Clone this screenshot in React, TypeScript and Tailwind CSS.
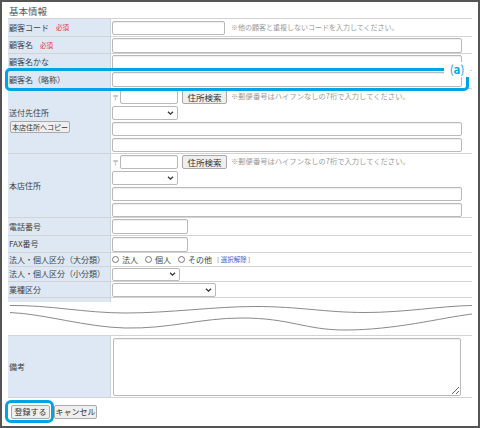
import React from 'react';

const inputCls =
  'rounded-[2px] border border-[#b9b9b9] bg-white shadow-[inset_0_1px_1px_rgba(0,0,0,0.07)] outline-none';
const btnCls =
  'flex items-center justify-center rounded-[2px] border border-[#a9a9a9] bg-[#efefef] leading-none text-[#333]';
const rowCls = 'flex border-b border-[#d3d3d3]';
const labelCls =
  'flex w-[103px] shrink-0 items-center border-r border-[#cbd4de] bg-[#dde8f4] pl-[1px] text-[8px] leading-none text-[#444]';
const valueCls = 'flex flex-1 items-center pl-[1px]';

function Required() {
  return <span className="ml-[7px] text-[6.5px] leading-none text-[#e8332f]">必須</span>;
}

function Select({ className }: { className: string }) {
  return (
    <div className={`relative ${className}`}>
      <select className="h-full w-full appearance-none rounded-[2px] border border-[#b9b9b9] bg-white outline-none" />
      <svg
        className="pointer-events-none absolute right-[4px] top-1/2 -translate-y-1/2"
        width="7"
        height="5"
        viewBox="0 0 7 5"
      >
        <path d="M1 1.2l2.5 2.4L6 1.2" stroke="#333" strokeWidth="1.3" fill="none" />
      </svg>
    </div>
  );
}

function AddressBlock() {
  return (
    <div className="flex flex-1 flex-col gap-[2px] py-[1px] pl-[1px]">
      <div className="flex h-[14px] items-center">
        <span className="w-[8px] text-[7px] leading-none text-[#999]">〒</span>
        <input className={`${inputCls} h-[14px] w-[58px]`} />
        <button className={`${btnCls} ml-[4px] h-[14px] w-[45px] text-[8.5px]`}>住所検索</button>
        <span className="ml-[4px] whitespace-nowrap text-[7.3px] leading-none text-[#999]">
          ※郵便番号はハイフンなしの7桁で入力してください。
        </span>
      </div>
      <Select className="h-[14px] w-[66px]" />
      <input className={`${inputCls} h-[14px] w-[350px]`} />
      <input className={`${inputCls} h-[14px] w-[350px]`} />
    </div>
  );
}

function Radio({ label }: { label: string }) {
  return (
    <label className="flex items-center gap-[3px]">
      <input
        type="radio"
        name="kubun"
        className="h-[7px] w-[7px] appearance-none rounded-full border border-[#777] bg-white"
      />
      <span className="text-[8px] leading-none text-[#444]">{label}</span>
    </label>
  );
}

export default function App() {
  return (
    <div className="relative h-[428px] w-[480px] overflow-hidden border-2 border-[#555] bg-white font-['Noto_Sans_CJK_JP','Noto_Sans',sans-serif]">
      <div className="ml-[6px] w-[464px]">
        <div className="h-[16px] pl-[1px] pt-[3px] text-[9.5px] leading-[12px] text-[#555]">基本情報</div>

        <div className="border-t border-[#d3d3d3]">
          <div className={`${rowCls} h-[18px]`}>
            <div className={labelCls}>
              顧客コード
              <Required />
            </div>
            <div className={valueCls}>
              <input className={`${inputCls} h-[14px] w-[113px]`} />
              <span className="ml-[6px] whitespace-nowrap text-[7px] leading-none text-[#999]">
                ※他の顧客と重複しないコードを入力してください。
              </span>
            </div>
          </div>

          <div className={`${rowCls} h-[17px]`}>
            <div className={labelCls}>
              顧客名
              <Required />
            </div>
            <div className={valueCls}>
              <input className={`${inputCls} h-[15px] w-[350px]`} />
            </div>
          </div>

          <div className={`${rowCls} h-[17px]`}>
            <div className={labelCls}>顧客名かな</div>
            <div className={valueCls}>
              <input className={`${inputCls} h-[15px] w-[350px]`} />
            </div>
          </div>

          <div className={`${rowCls} h-[18px]`}>
            <div className={labelCls}>顧客名（略称）</div>
            <div className={valueCls}>
              <input className={`${inputCls} h-[15px] w-[350px]`} />
            </div>
          </div>

          <div className={`${rowCls} h-[65px]`}>
            <div className={`${labelCls} flex-col !items-start justify-center gap-[4px]`}>
              <span>送付先住所</span>
              <button className={`${btnCls} ml-[1px] h-[12px] w-[60px] text-[7px]`}>本店住所へコピー</button>
            </div>
            <AddressBlock />
          </div>

          <div className={`${rowCls} h-[64px]`}>
            <div className={labelCls}>本店住所</div>
            <AddressBlock />
          </div>

          <div className={`${rowCls} h-[18px]`}>
            <div className={labelCls}>電話番号</div>
            <div className={valueCls}>
              <input className={`${inputCls} h-[15px] w-[76px]`} />
            </div>
          </div>

          <div className={`${rowCls} h-[17px]`}>
            <div className={labelCls}>FAX番号</div>
            <div className={valueCls}>
              <input className={`${inputCls} h-[15px] w-[76px]`} />
            </div>
          </div>

          <div className={`${rowCls} h-[14px]`}>
            <div className={labelCls}>法人・個人区分（大分類）</div>
            <div className={`${valueCls} gap-[7px]`}>
              <Radio label="法人" />
              <Radio label="個人" />
              <Radio label="その他" />
              <span className="-ml-[2px] whitespace-nowrap text-[6.5px] leading-none text-[#777]">
                [ <a className="text-[#3a62c4]">選択解除</a> ]
              </span>
            </div>
          </div>

          <div className={`${rowCls} h-[15px]`}>
            <div className={labelCls}>法人・個人区分（小分類）</div>
            <div className={valueCls}>
              <Select className="h-[13px] w-[68px]" />
            </div>
          </div>

          <div className={`${rowCls} h-[16px]`}>
            <div className={labelCls}>業種区分</div>
            <div className={valueCls}>
              <Select className="h-[14px] w-[104px]" />
            </div>
          </div>

          <div className="flex h-[4px] overflow-hidden">
            <div className="w-[103px] shrink-0 border-r border-[#cbd4de] bg-[#dde8f4]" />
            <div className="flex-1 pl-[1px] pt-[1px]">
              <input className={`${inputCls} h-[14px] w-[83px]`} />
            </div>
          </div>
        </div>
      </div>

      <svg width="476" height="33" viewBox="2 302 476 33" className="block">
        <path
          d="M10 305.5 C 50 305 85 313 125 313 C 170 313 215 306.5 255 306.5 C 300 306.5 325 312.5 365 312.5 C 405 312.5 440 306 472 305.5"
          stroke="#8a8a8a"
          strokeWidth="1"
          fill="none"
        />
        <path
          d="M10 312.5 C 45 314 85 327 125 328 C 170 329 200 318 242 318 C 290 318 305 330 345 330 C 395 330 440 318 472 314"
          stroke="#8a8a8a"
          strokeWidth="1"
          fill="none"
        />
      </svg>

      <div className="ml-[6px] w-[464px]">
        <div className={`${rowCls} h-[63px] border-t`}>
          <div className={labelCls}>備考</div>
          <div className="flex flex-1 items-center pl-[2px]">
            <textarea className={`${inputCls} h-[58px] w-[348px]`} />
          </div>
        </div>

        <div className="ml-[3px] mt-[7px] flex gap-[4px]">
          <button className={`${btnCls} h-[14px] w-[39px] text-[8px]`}>登録する</button>
          <button className={`${btnCls} h-[14px] w-[43px] text-[8px]`}>キャンセル</button>
        </div>
      </div>

      <div className="pointer-events-none absolute left-[3px] top-[66px] h-[23px] w-[464px] rounded-[5px] border-[3px] border-[#00a3e6]" />
      <div className="absolute left-[442px] top-[60px] flex h-[15px] w-[26px] items-center justify-center bg-white text-[11.5px] leading-none text-[#00a3e6]">
        <span>(</span>
        <span className="font-bold">a</span>
        <span>)</span>
      </div>
      <div className="pointer-events-none absolute left-[3px] top-[398px] h-[23px] w-[49px] rounded-[6px] border-[3px] border-[#00a3e6]" />
    </div>
  );
}
